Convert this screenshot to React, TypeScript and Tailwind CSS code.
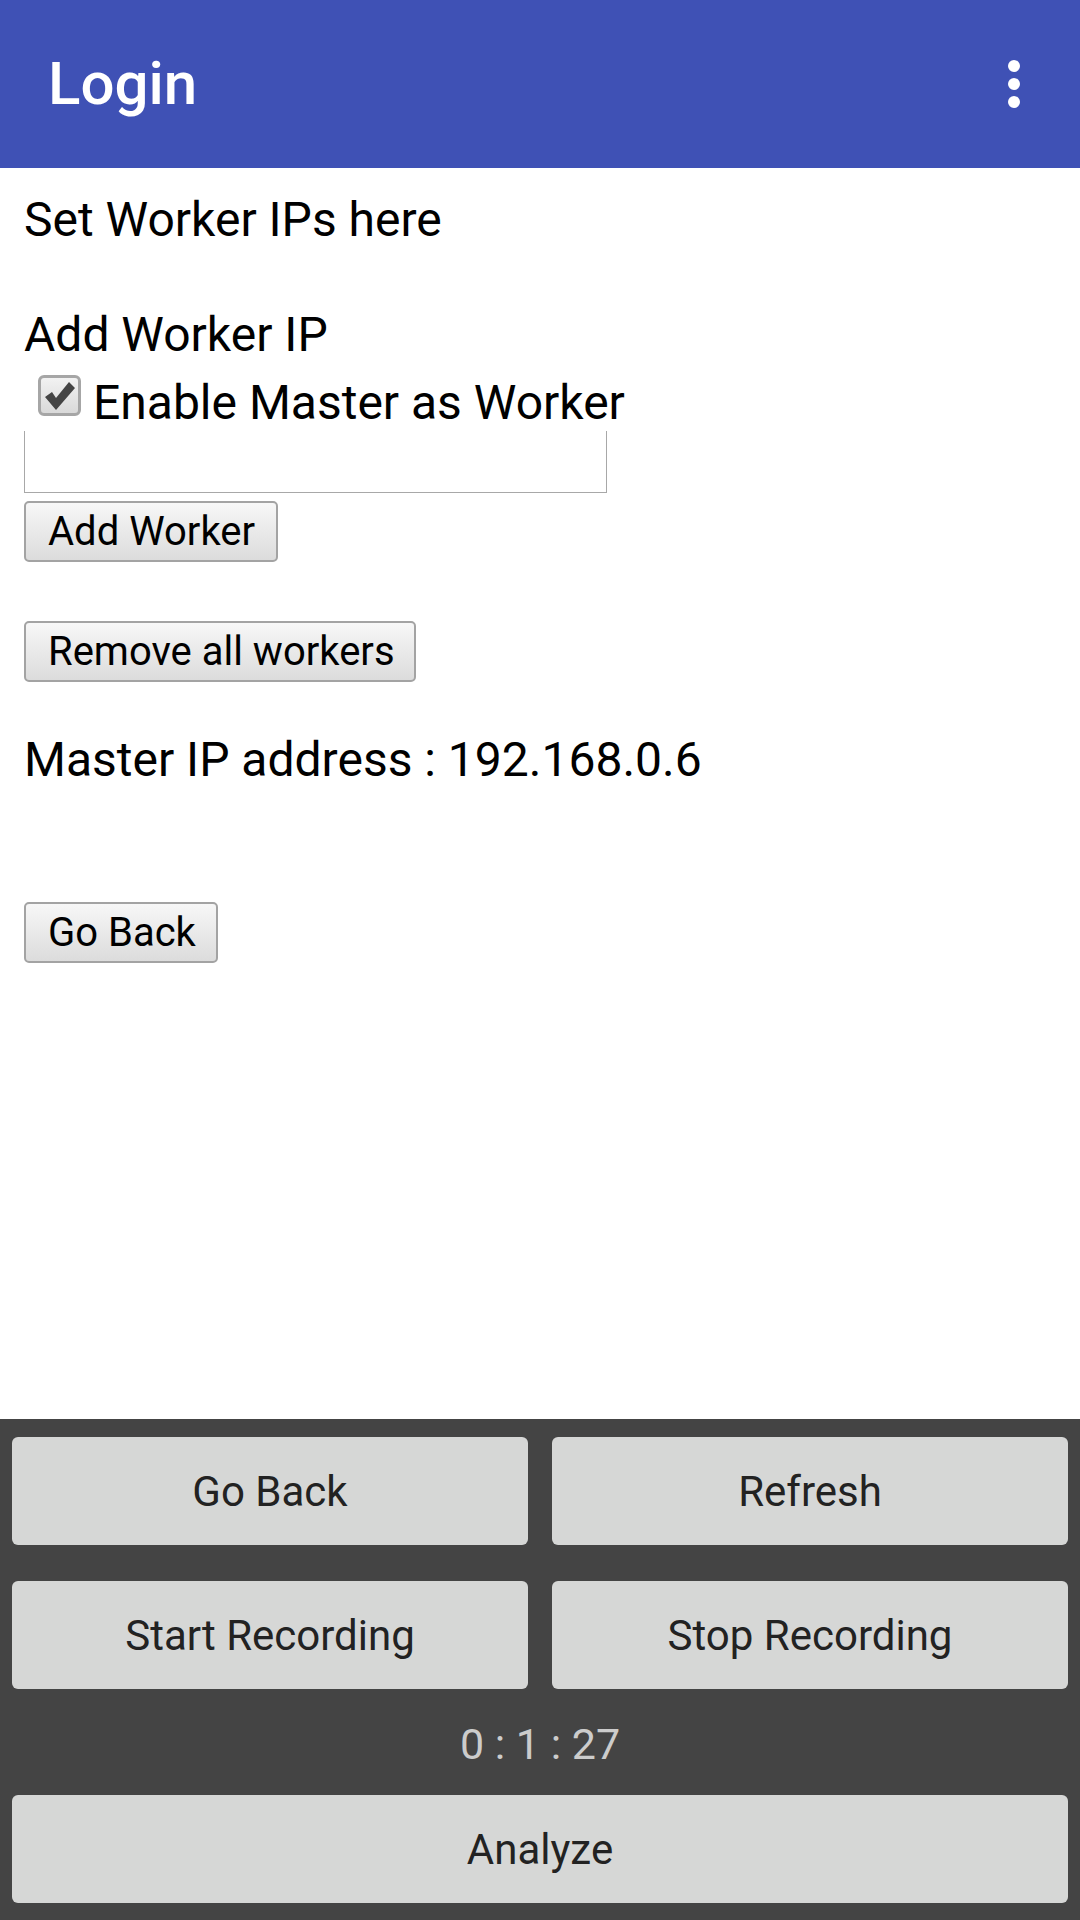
import React from "react";

const webBtn =
  "h-[61px] rounded-[5px] border-2 border-[#a3a3a3] bg-gradient-to-b from-[#f7f7f7] to-[#dcdcdc] text-[40px] leading-none text-black text-left pl-[22px]";

const panelBtn =
  "h-[108px] rounded-[6px] bg-[#d6d7d6] text-[42px] text-[#222222] flex items-center justify-center";

function MoreIcon() {
  return (
    <svg width="72" height="72" viewBox="0 0 24 24" fill="white">
      <circle cx="12" cy="6" r="2" />
      <circle cx="12" cy="12" r="2" />
      <circle cx="12" cy="18" r="2" />
    </svg>
  );
}

function CheckBox() {
  return (
    <span className="w-[43px] h-[41px] ml-[14px] mr-[12px] rounded-[6px] border-[3px] border-[#a6a6a6] bg-gradient-to-b from-[#f2f2f2] to-[#d9d9d9] flex items-center justify-center shrink-0">
      <svg width="32" height="30" viewBox="0 0 32 30">
        <path d="M1 16 L8 11 L12 17 L25 1 L31 7 L12 29 Z" fill="#444444" />
      </svg>
    </span>
  );
}

export default function App() {
  return (
    <div className="w-[1080px] h-[1920px] flex flex-col bg-white font-['Roboto',sans-serif]">
      <header className="h-[168px] bg-[#3f51b5] flex items-center justify-between pl-[48px] pr-[30px]">
        <h1 className="text-[60px] font-medium text-white leading-none">Login</h1>
        <MoreIcon />
      </header>

      <main className="flex-1 flex flex-col items-start px-[24px] pt-[24px] text-[48px] leading-[56px] text-black">
        <p>Set Worker IPs here</p>
        <p className="mt-[59px]">Add Worker IP</p>
        <label className="mt-[12px] flex items-start">
          <CheckBox />
          <span>Enable Master as Worker</span>
        </label>
        <div className="w-[583px] h-[62px] border border-t-0 border-[#a8a8a8]" />
        <button className={`mt-[8px] w-[254px] ${webBtn}`}>Add Worker</button>
        <button className={`mt-[59px] w-[392px] ${webBtn}`}>Remove all workers</button>
        <p className="mt-[50px]">Master IP address : 192.168.0.6</p>
        <button className={`mt-[114px] w-[194px] ${webBtn}`}>Go Back</button>
      </main>

      <footer className="h-[501px] bg-[#444444] pt-[18px] px-[12px] flex flex-col">
        <div className="grid grid-cols-2 gap-x-[24px] gap-y-[36px]">
          <button className={panelBtn}>Go Back</button>
          <button className={panelBtn}>Refresh</button>
          <button className={panelBtn}>Start Recording</button>
          <button className={panelBtn}>Stop Recording</button>
        </div>
        <p className="mt-[30px] h-[50px] leading-[50px] text-center text-[43px] text-[#cccccc]">0 : 1 : 27</p>
        <button className={`mt-[26px] ${panelBtn}`}>Analyze</button>
      </footer>
    </div>
  );
}
